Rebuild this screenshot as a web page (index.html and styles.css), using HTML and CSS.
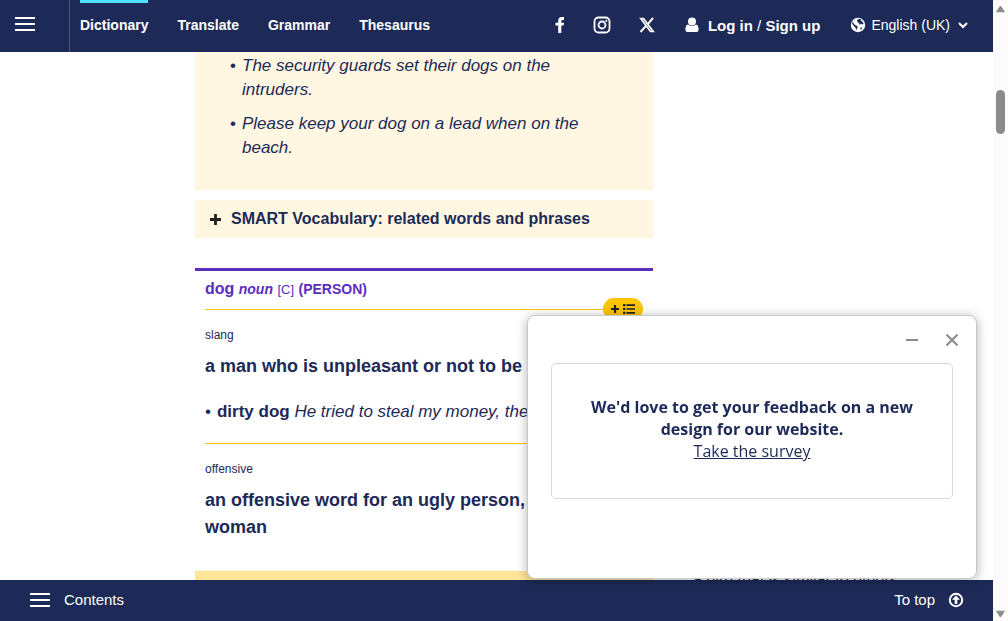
FILE: index.html
```html
<!DOCTYPE html>
<html lang="en-GB">
<head>
<meta charset="utf-8">
<meta name="viewport" content="width=device-width, initial-scale=1">
<title>dog | Dictionary</title>
<link rel="stylesheet" href="styles.css">
</head>
<body>
<div class="app">
  <header class="topbar">
    <button class="menu-btn" aria-label="Open menu"><span class="burger"></span></button>
    <nav class="nav">
      <a class="nav-link active" href="#">Dictionary</a>
      <a class="nav-link" href="#">Translate</a>
      <a class="nav-link" href="#">Grammar</a>
      <a class="nav-link" href="#">Thesaurus</a>
    </nav>
    <div class="tools">
      <div class="social">
        <a href="#" aria-label="Facebook"><svg width="10" height="16" viewBox="0 0 10 16"><path fill="#fff" d="M9 0v3H7.500Q6.300 3 6.300 4v1.700H9L8.600 8.500H6.300V16H3.200V8.500H.5V5.700h2.700V3.800Q3.200.2 6.800 0z"/></svg></a>
        <a href="#" aria-label="Instagram"><svg width="18" height="18" viewBox="0 0 18 18"><rect x="1.500" y="1.500" width="15" height="15" rx="4" fill="none" stroke="#fff" stroke-width="1.800"/><circle cx="9" cy="9" r="3.500" fill="none" stroke="#fff" stroke-width="1.800"/><circle cx="13.300" cy="4.800" r="1.100" fill="#fff"/></svg></a>
        <a href="#" aria-label="X"><svg width="16" height="16" viewBox="0 0 16 16"><path d="M1.800 1.500h2.700l9.700 13h-2.700z" fill="none" stroke="#fff" stroke-width="1.700"/><path d="M14 1 9 6.800M6.800 9.200 1.500 15" stroke="#fff" stroke-width="2"/></svg></a>
      </div>
      <div class="account">
        <svg width="14" height="16" viewBox="0 0 14 16"><circle cx="7" cy="4.500" r="4" fill="#fff"/><path fill="#fff" d="M3 7.500Q7 10.500 11 7.500 13.600 8 13.600 12.500 13.600 15 11.500 15h-9Q.4 15 .4 12.500.4 8 3 7.500z"/></svg>
        <span><a href="#">Log in</a> / <a href="#">Sign up</a></span>
      </div>
      <button class="lang">
        <svg width="16" height="16" viewBox="0 0 16 16"><circle cx="8" cy="8" r="7.200" fill="#fff"/><path fill="#1d2a57" d="m7 3 2-1.200 2.200.6-.4 1.200 1.500.9 1.200 1.800-.6 1.300-1.500-.8-1.600.9-.8-.9.400-1.200-1.500.3-.5-1.300zM3 4l.6 2.600 1.600 1.300 2.100 1.200.3 1.300-1.200 2.600-.9-2.300-1.800-1.900-1.600-2.300z"/><path fill="#1d2a57" d="m10.400 10.800 1.800-.6-.4 1.700-1.300.9z"/></svg>
        <span>English (UK)</span>
        <svg class="chev" width="10" height="8" viewBox="0 0 10 8"><path d="m1 2 4 4 4-4" fill="none" stroke="#fff" stroke-width="2"/></svg>
      </button>
    </div>
  </header>

  <main class="page">
    <article class="entry">
      <section class="examples">
        <ul>
          <li>The security guards set their dogs on the intruders.</li>
          <li>Please keep your dog on a lead when on the beach.</li>
        </ul>
      </section>
      <button class="smart">
        <svg width="11" height="11" viewBox="0 0 11 11"><path d="M5.500 0v11M0 5.500h11" stroke="#222" stroke-width="2.800"/></svg>
        <span>SMART Vocabulary: related words and phrases</span>
      </button>
      <section class="sense">
        <h3 class="sense-title">dog <i>noun</i> <span class="gram">[C]</span> <small>(PERSON)</small></h3>
        <div class="block">
          <button class="add" aria-label="Add to word list">
            <svg width="26" height="12" viewBox="0 0 26 12"><path d="M5 2v8M1 6h8" stroke="#222" stroke-width="2.200"/><path d="M16.500 2.200H25M16.500 6H25M16.500 9.800H25" stroke="#222" stroke-width="1.700"/><path d="M13 2.200h2.400M13 6h2.400M13 9.800h2.400" stroke="#222" stroke-width="2.200"/></svg>
          </button>
          <p class="label">slang</p>
          <p class="def">a man who is unpleasant or not to be trusted</p>
          <ul class="examp"><li><b>dirty dog</b> <i>He tried to steal my money, the dirty dog.</i></li></ul>
        </div>
        <div class="block">
          <p class="label">offensive</p>
          <p class="def">an offensive word for an ugly person, especially a woman</p>
        </div>
      </section>
      <div class="band"></div>
    </article>
    <aside class="side"><p>a bird that is similar to others</p></aside>
  </main>

  <footer class="bottombar">
    <button class="contents"><span class="burger"></span>Contents</button>
    <a class="to-top" href="#">To top
      <svg width="16" height="16" viewBox="0 0 16 16"><circle cx="8" cy="8" r="6.200" fill="none" stroke="#fff" stroke-width="2"/><path fill="#fff" d="m8 3.600 4 4.200H9.300V12H6.700V7.800H4z"/></svg>
    </a>
  </footer>
</div>

<div class="scrollbar" aria-hidden="true">
  <svg width="9" height="8" viewBox="0 0 9 8"><path d="M4.500 1 8.400 6.800H.6z" fill="#8b8b8b" stroke="#8b8b8b" stroke-linejoin="round"/></svg>
  <div class="track"><div class="thumb"></div></div>
  <svg width="9" height="8" viewBox="0 0 9 8"><path d="M4.500 7 8.400 1.200H.6z" fill="#8b8b8b" stroke="#8b8b8b" stroke-linejoin="round"/></svg>
</div>

<div class="survey" role="dialog" aria-label="Feedback">
  <div class="survey-head">
    <button aria-label="Minimise"><svg width="14" height="14" viewBox="0 0 14 14"><path d="M1 7h12" stroke="#8a8a8a" stroke-width="2"/></svg></button>
    <button aria-label="Close"><svg width="14" height="14" viewBox="0 0 14 14"><path d="m1.500 1.500 11 11M12.500 1.500l-11 11" stroke="#8a8a8a" stroke-width="2"/></svg></button>
  </div>
  <div class="survey-body">
    <p>We'd love to get your feedback on a new design for our website.</p>
    <a href="#">Take the survey</a>
  </div>
</div>
</body>
</html>
```
FILE: styles.css
```css
* { box-sizing: border-box; }
body {
  margin: 0;
  height: 100vh;
  display: flex;
  overflow: hidden;
  background: #fff;
  color: #1d2a57;
  font-family: "Liberation Sans", Arial, sans-serif;
}
p, h3, ul { margin: 0; padding: 0; }
ul { list-style: none; }
svg { display: block; flex: none; }
button {
  border: 0;
  padding: 0;
  background: none;
  color: inherit;
  font: inherit;
  text-align: left;
  cursor: pointer;
}
a { color: inherit; text-decoration: none; }

.app {
  flex: 1;
  min-width: 0;
  display: grid;
  grid-template-rows: 52px minmax(0, 1fr) 41px;
}

.topbar {
  display: flex;
  background: #1d2a57;
  color: #fff;
  font-size: 15px;
}
.menu-btn {
  width: 70px;
  padding: 0 0 4px 15px;
  border-right: 1px solid #4a5479;
}
.burger {
  display: block;
  width: 20px;
  height: 14px;
  border-top: 2px solid #fff;
  border-bottom: 2px solid #fff;
  background: linear-gradient(#fff, #fff) center / 100% 2px no-repeat;
}
.nav {
  display: flex;
  gap: 29px;
  padding-left: 10px;
  font-size: 14px;
  font-weight: bold;
}
.nav-link {
  border-top: 3px solid transparent;
  line-height: 44px;
}
.nav-link.active { border-color: #4fe0fc; }
.tools {
  display: flex;
  align-items: center;
  gap: 30px;
  margin-left: auto;
  padding-right: 25px;
  padding-bottom: 2px;
}
.social {
  display: flex;
  align-items: center;
  gap: 28px;
}
.account { display: flex; align-items: center; gap: 9px; }
.account a { font-weight: bold; }
.lang { display: flex; align-items: center; gap: 5px; font-size: 14px; }
.chev { margin-left: 3px; }

.page {
  display: flex;
  gap: 40px;
  padding-left: 195px;
  overflow: hidden;
}
.entry { flex: 0 0 458px; }
.examples {
  padding: 2px 40px 30px 35px;
  background: #fff7e2;
  font-size: 17px;
  font-style: italic;
  line-height: 24px;
}
.examples li { display: flex; }
.examples li::before {
  content: "•";
  flex: 0 0 12px;
  font-style: normal;
}
.examples li + li { margin-top: 10px; }
.smart {
  display: flex;
  align-items: center;
  gap: 10px;
  width: 100%;
  height: 38px;
  margin: 10px 0 30px;
  padding: 0 15px;
  background: #fff7e2;
  font-size: 16px;
  font-weight: bold;
}
.sense {
  padding: 0 10px;
  border-top: 3px solid #5b2dbe;
}
.sense-title {
  padding: 6px 0 9px;
  color: #5b2dbe;
  font-size: 16px;
  line-height: 23px;
}
.sense-title i { font-size: 14px; }
.sense-title .gram { font-size: 13px; font-weight: normal; }
.sense-title small { font-size: 14px; }
.sense-title { padding-bottom: 8px; }
.block {
  position: relative;
  padding: 16px 0 20px;
  border-top: 1px solid #fec400;
}
.add {
  position: absolute;
  top: -12px;
  right: 0;
  display: grid;
  place-items: center;
  width: 40px;
  height: 22px;
  border-radius: 11px;
  background: #fec400;
}
.label { font-size: 12px; line-height: 18px; }
.def {
  padding-top: 9px;
  font-size: 18px;
  font-weight: bold;
  line-height: 27px;
  white-space: nowrap;
}
.block:last-child .def { white-space: normal; }
.examp {
  height: 43px;
  padding-top: 20px;
  font-size: 17px;
  line-height: 24px;
  white-space: nowrap;
}
.examp li::before { content: "•"; margin-right: 6px; }
.band { height: 40px; margin-top: 10px; background: #ffe596; }
.side {
  align-self: flex-end;
  margin-bottom: -12px;
  font-size: 16px;
  line-height: 24px;
}

.bottombar {
  display: flex;
  justify-content: space-between;
  align-items: center;
  padding: 0 29px 2px 30px;
  background: #1d2a57;
  color: #fff;
  font-size: 15px;
}
.contents { display: flex; align-items: center; gap: 14px; }
.to-top { display: flex; align-items: center; gap: 13px; }

.scrollbar {
  flex: 0 0 15px;
  display: flex;
  flex-direction: column;
  align-items: center;
  padding: 5px 0 3px;
  background: #fcfcfc;
}
.track { flex: 1; padding-top: 77px; }
.thumb {
  width: 9px;
  height: 44px;
  border-radius: 5px;
  background: #8b8b8b;
}

.survey {
  position: fixed;
  right: 31px;
  bottom: 42px;
  width: 450px;
  padding: 0 23px 79px;
  border: 1px solid #c6c8ca;
  border-radius: 8px;
  background: #fff;
  box-shadow: 0 2px 12px rgba(0, 0, 0, 0.3);
  font-family: "Open Sans", sans-serif;
  font-size: 16px;
  line-height: 22px;
}
.survey-head {
  display: flex;
  justify-content: flex-end;
  align-items: center;
  gap: 26px;
  height: 47px;
  margin-right: -6px;
}
.survey-body {
  padding: 32px 36px 36px;
  border: 1px solid #d8d9da;
  border-radius: 5px;
  text-align: center;
}
.survey-body p { font-weight: bold; }
.survey-body a { text-decoration: underline; }
```
